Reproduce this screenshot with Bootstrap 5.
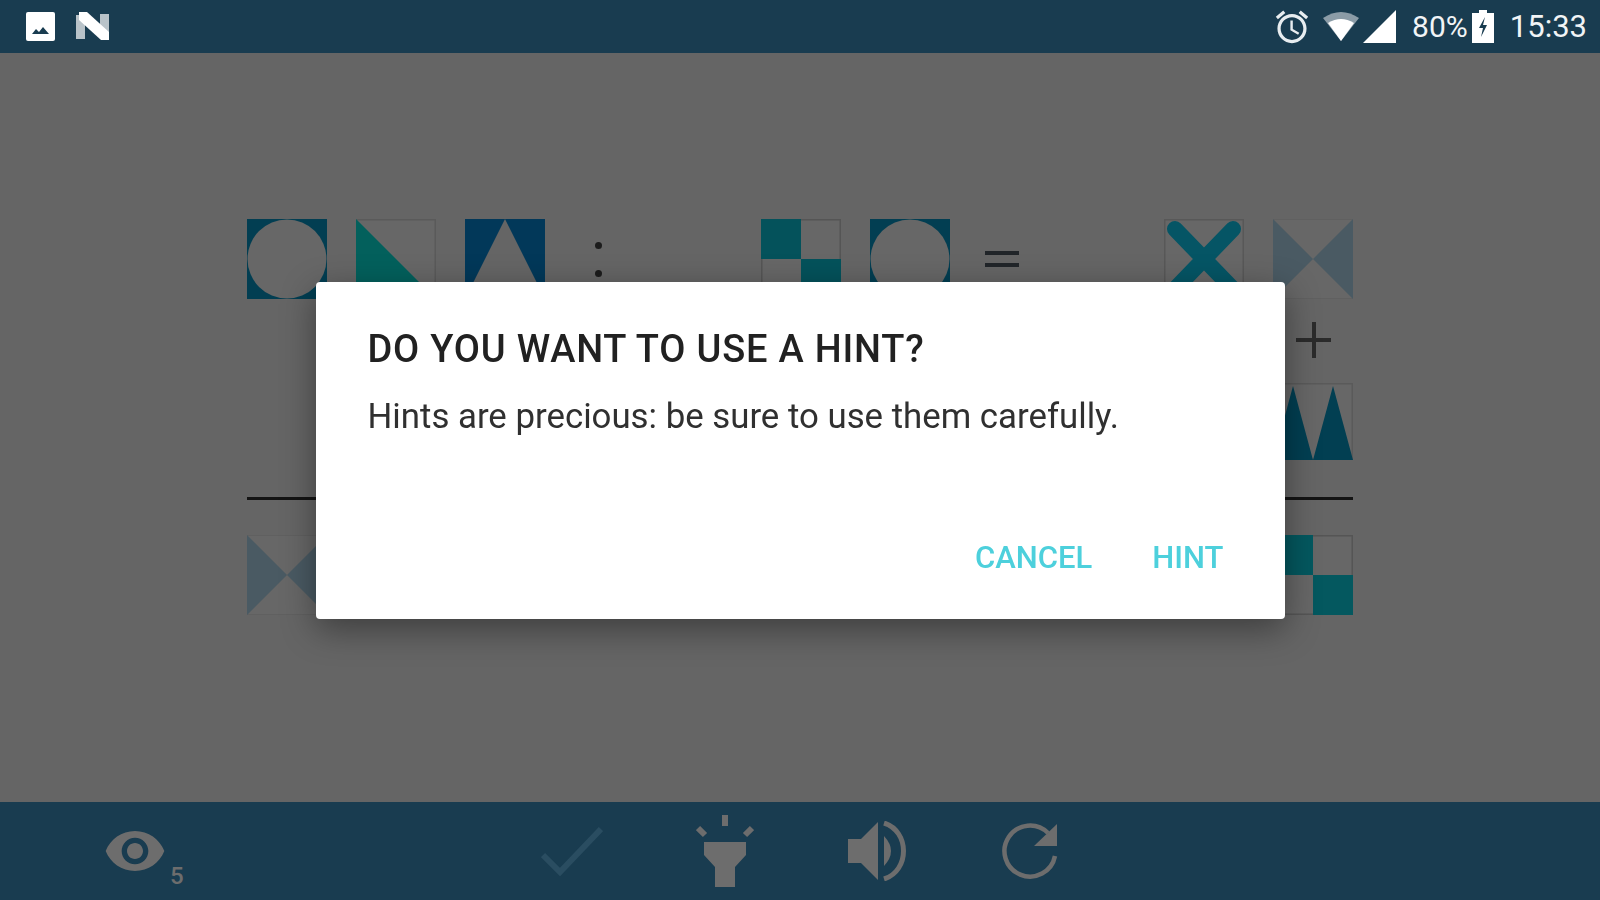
<!DOCTYPE html>
<html lang="en">
<head>
    <meta charset="UTF-8">
    <title>Hint</title>
    <link href="https://cdn.jsdelivr.net/npm/bootstrap@5.3.0/dist/css/bootstrap.min.css" rel="stylesheet">
    <style>
        body { background: #656565; font-family: Roboto, "Liberation Sans", sans-serif; overflow: hidden; }
        .status-strip { height: 53px; background: #193c50; color: #f1f4f6; padding: 0 13px 0 26px; }
        .status-text { font-size: 30px; line-height: 1; }
        .status-time { font-size: 31px; line-height: 1; }
        .n-mark { margin-left: 21px; }
        .wifi-mark { margin-left: 14px; }
        .puzzle-area { padding: 166px 0 0 247px; }
        .puzzle-grid { display: grid; grid-template-columns: 80px 80px 80px 48px 81px 80px 80px 46px 81px 80px 80px; grid-template-rows: 80px 84px 78px 74px 80px; column-gap: 29px; }
        .tile { display: block; width: 80px; height: 80px; }
        .tile-m { height: 77px; }
        .colon-cell { gap: 21px; }
        .colon-dot { width: 7px; height: 7px; background: #1c1c1c; }
        .op-sign { line-height: 1; }
        .rule-line { grid-column: 1 / -1; height: 3px; background: #141414; }
        .tool-strip { height: 98px; background: #193c50; padding-left: 103px; }
        .tool-eye { width: 392px; }
        .tool-count { font-size: 24px; font-weight: 500; line-height: 1; color: #6d6d6d; margin: 50px 0 0 3px; }
        .tool-cell { width: 153px; }
        .hint-dialog { max-width: 969px; }
        .hint-box { border: 0; border-radius: 4px; padding: 47px 61px 41px 52px; box-shadow: 0 10px 34px rgba(0,0,0,.4); }
        .hint-title { font-size: 38px; letter-spacing: .8px; line-height: 40px; font-weight: 500; color: #212121; margin: 0 0 25px; }
        .hint-text { font-size: 34.8px; line-height: 44px; color: #303030; margin: 0 0 100px; }
        .hint-btn { font-size: 31px; line-height: 40px; font-weight: 500; color: #4dd0dc; gap: 60px; }
    </style>
</head>
<body>
<div class="d-flex flex-column vh-100">
    <div class="status-strip d-flex align-items-center">
        <svg width="29" height="29" viewBox="0 0 29 29"><rect width="29" height="29" rx="2" fill="#fff"/><path d="M6 22l4-5 3 3 4-5 6 7z" fill="#193c50"/></svg>
        <svg class="n-mark" width="33" height="29" viewBox="0 0 33 29"><path d="M0 3h9v24H0zM24 2h9v24h-9z" fill="#b9c3c9"/><path d="M3 0h8l22 20v8h-8L3 8z" fill="#fff"/></svg>
        <div class="ms-auto d-flex align-items-center">
            <svg width="34" height="34" viewBox="1.5 1.5 21 21"><path fill="#e8edf0" d="M22 5.72l-4.6-3.86-1.29 1.53 4.6 3.86L22 5.72zM7.88 3.39L6.6 1.86 2 5.71l1.29 1.53 4.59-3.85zM12.5 8H11v6l4.75 2.85.75-1.23-4-2.37V8zM12 4c-4.97 0-9 4.03-9 9s4.03 9 9 9 9-4.03 9-9-4.03-9-9-9zm0 16c-3.87 0-7-3.13-7-7s3.13-7 7-7 7 3.13 7 7-3.13 7-7 7z"/></svg>
            <svg class="wifi-mark" width="36" height="29" viewBox="0 0 36 29"><path d="M0 6Q18-6 36 6L18 29z" fill="#8b9ca7"/><path d="M5 11Q18 3 31 11L18 29z" fill="#fff"/></svg>
            <svg class="ms-1" width="33" height="33" viewBox="0 0 33 33"><path d="M0 33L33 0v33z" fill="#fff"/></svg>
            <span class="status-text ms-3">80%</span>
            <svg class="ms-1" width="22" height="33" viewBox="0 0 22 33"><path d="M7 0h8v3h7v30H0V3h7z" fill="#fff"/><path d="M13 7l-6 11h4l-2 9 6-12h-4z" fill="#193c50"/></svg>
            <span class="status-time ms-3">15:33</span>
        </div>
    </div>

    <div class="puzzle-area flex-grow-1">
        <div class="puzzle-grid">
            <!-- row 1 -->
            <svg class="tile" viewBox="0 0 80 80"><rect width="80" height="80" fill="#023e52"/><circle cx="40" cy="40" r="39.5" fill="#676767"/></svg>
            <svg class="tile" viewBox="0 0 80 80"><rect x=".75" y=".75" width="78.5" height="78.5" fill="#676767" stroke="#5a5a5a" stroke-width="1.5"/><path d="M0 0l80 80H0z" fill="#03605c"/></svg>
            <svg class="tile" viewBox="0 0 80 80"><path d="M0 0h40L0 80zM80 0H40l40 80z" fill="#023859"/></svg>
            <div class="colon-cell d-flex flex-column align-items-center justify-content-center">
                <span class="colon-dot rounded-circle"></span>
                <span class="colon-dot rounded-circle"></span>
            </div>
            <div></div>
            <svg class="tile" viewBox="0 0 80 80"><rect x=".75" y=".75" width="78.5" height="78.5" fill="#676767" stroke="#555" stroke-width="1.5"/><path d="M0 0h40v40H0zM40 40h40v40H40z" fill="#04525b"/></svg>
            <svg class="tile" viewBox="0 0 80 80"><rect width="80" height="80" fill="#023e52"/><circle cx="40" cy="40" r="39.5" fill="#676767"/></svg>
            <div class="d-flex flex-column align-items-center justify-content-center gap-2">
                <span class="w-75 bg-dark pt-1"></span>
                <span class="w-75 bg-dark pt-1"></span>
            </div>
            <div></div>
            <svg class="tile" viewBox="0 0 80 80"><rect x=".75" y=".75" width="78.5" height="78.5" fill="#676767" stroke="#585858" stroke-width="1.5"/><path d="M11 10l58 60M69 10L11 70" stroke="#055565" stroke-width="16" stroke-linecap="round"/></svg>
            <svg class="tile" viewBox="0 0 80 80"><rect x=".5" y=".5" width="79" height="79" fill="#676767" stroke="#606060"/><path d="M0 0l40 40L0 80zM80 0L40 40l40 40z" fill="#4a5a63"/></svg>
            <!-- row 2 -->
            <div class="op-sign text-center" style="grid-column: 11">
                <svg width="36" height="84" viewBox="-1 -4 36 84"><path d="M0 37h36M18 19v36" stroke="#2b2b2b" stroke-width="4"/></svg>
            </div>
            <!-- row 3 -->
            <svg class="tile tile-m" style="grid-column: 11" viewBox="0 0 80 77"><rect x=".75" y=".75" width="78.5" height="75.5" fill="#676767" stroke="#5a5a5a" stroke-width="1.5"/><path d="M0 77L20 3l20 74zM40 77L60 3l20 74z" fill="#023f52"/></svg>
            <!-- row 4 -->
            <div class="rule-line align-self-center"></div>
            <!-- row 5 -->
            <svg class="tile" viewBox="0 0 80 80"><rect x=".5" y=".5" width="79" height="79" fill="#676767" stroke="#606060"/><path d="M0 0l40 40L0 80zM80 0L40 40l40 40z" fill="#4a5a63"/></svg>
            <svg class="tile" style="grid-column: 11" viewBox="0 0 80 80"><rect x=".75" y=".75" width="78.5" height="78.5" fill="#676767" stroke="#555" stroke-width="1.5"/><path d="M0 0h40v40H0zM40 40h40v40H40z" fill="#04585f"/></svg>
        </div>
    </div>

    <div class="tool-strip d-flex align-items-center">
        <div class="tool-eye d-flex align-items-center">
            <svg width="64" height="64" viewBox="0 0 24 24"><path fill="#6d6d6d" d="M12 4.5C7 4.5 2.73 7.61 1 12c1.73 4.39 6 7.5 11 7.5s9.27-3.11 11-7.5c-1.73-4.39-6-7.5-11-7.5zM12 17c-2.76 0-5-2.24-5-5s2.24-5 5-5 5 2.24 5 5-2.24 5-5 5zm0-8c-1.66 0-3 1.34-3 3s1.34 3 3 3 3-1.34 3-3-1.34-3-3-3z"/></svg>
            <span class="tool-count">5</span>
        </div>
        <div class="tool-cell text-center">
            <svg width="62" height="50" viewBox="0 0 62 50"><path d="M2 29l17 17L60 3" fill="none" stroke="#2a4d61" stroke-width="6"/></svg>
        </div>
        <div class="tool-cell text-center">
            <svg width="58" height="72" viewBox="0 0 58 72"><path d="M29 0v11M2 13l7 7M56 13l-7 7" stroke="#6d6d6d" stroke-width="6"/><path d="M8 27h42v13L39 52v20H19V52L8 40z" fill="#6d6d6d"/></svg>
        </div>
        <div class="tool-cell text-center">
            <svg width="60" height="60" viewBox="0 0 60 60"><path d="M0 18h13L30 1v58L13 42H0z" fill="#6d6d6d"/><path d="M36 15q14 15 0 30z" fill="#6d6d6d"/><path d="M36 2c26 8 26 48 0 56" fill="none" stroke="#6d6d6d" stroke-width="5"/></svg>
        </div>
        <div class="tool-cell text-center">
            <svg width="58" height="58" viewBox="0 0 58 58"><path d="M46 11A25.5 25.5 0 1 0 53 34" fill="none" stroke="#6d6d6d" stroke-width="4.5"/><path d="M55 2L32 24H55z" fill="#6d6d6d"/></svg>
        </div>
    </div>
</div>

<div class="modal d-block">
    <div class="modal-dialog modal-dialog-centered hint-dialog">
        <div class="modal-content hint-box">
            <h5 class="hint-title">DO YOU WANT TO USE A HINT?</h5>
            <p class="hint-text">Hints are precious: be sure to use them carefully.</p>
            <div class="d-flex justify-content-end hint-btn">
                <span>CANCEL</span>
                <span>HINT</span>
            </div>
        </div>
    </div>
</div>
<script src="https://cdn.jsdelivr.net/npm/bootstrap@5.3.0/dist/js/bootstrap.bundle.min.js"></script>
</body>
</html>
